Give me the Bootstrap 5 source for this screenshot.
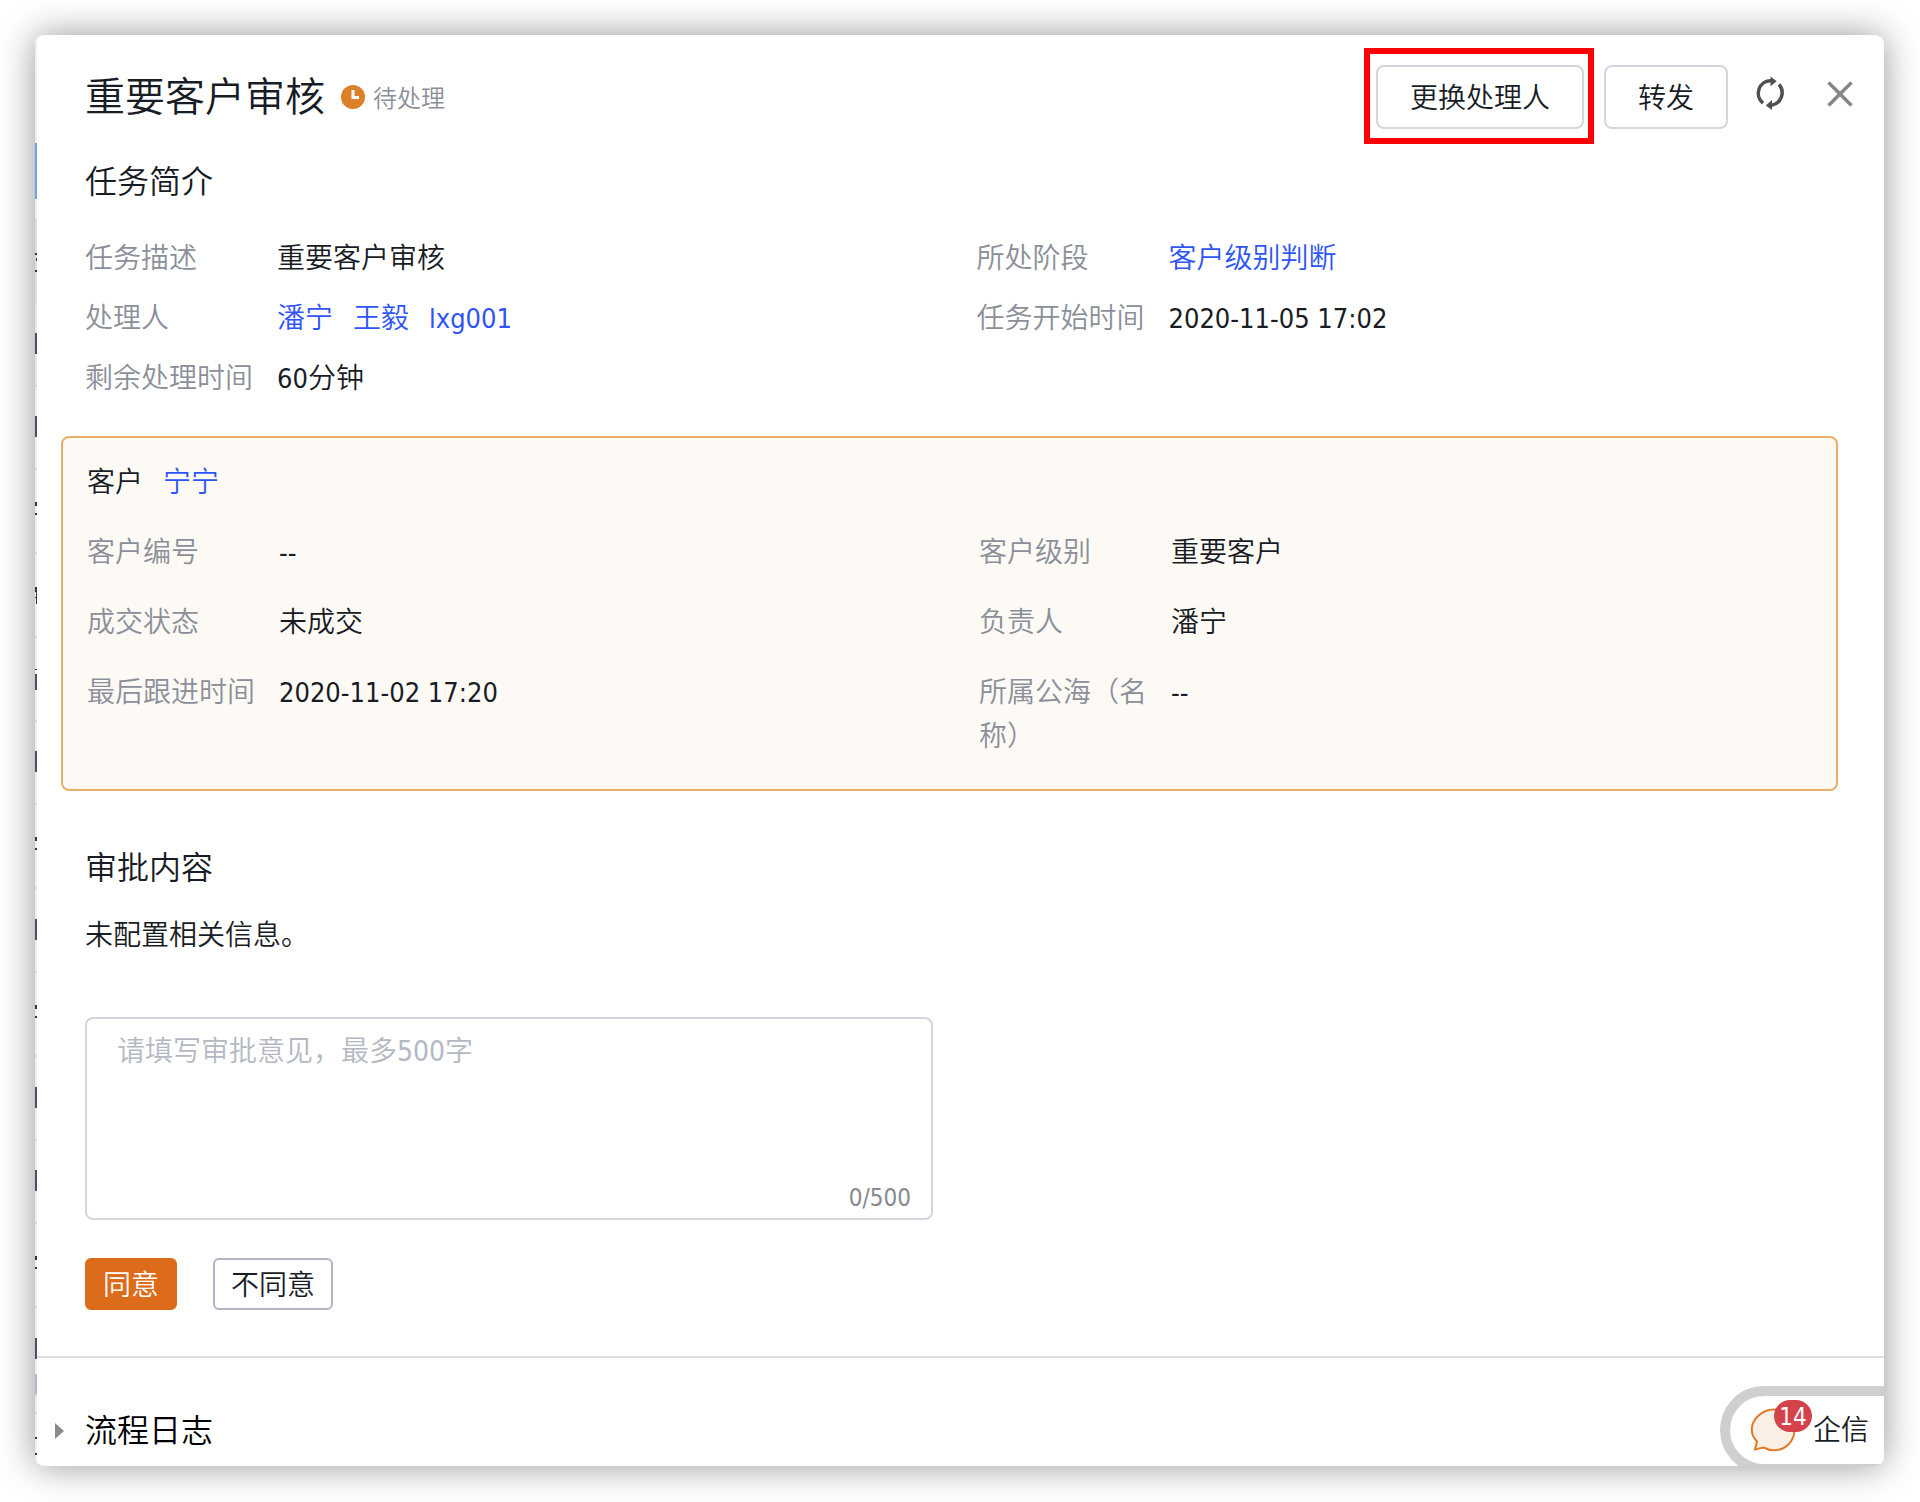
<!DOCTYPE html>
<html lang="zh-CN">
<head>
<meta charset="utf-8">
<meta name="viewport" content="width=device-width, initial-scale=1">
<title>重要客户审核</title>
<link href="https://cdn.jsdelivr.net/npm/bootstrap@5.3.0/dist/css/bootstrap.min.css" rel="stylesheet">
<style>
body{font-family:"DejaVu Sans Condensed","Noto Sans CJK SC",sans-serif;font-size:28px;line-height:44px;font-weight:350;color:#181c25;background:#fff;padding:35px 36px 36px 35px}
h1,h2,p,dl,dd,dt{margin:0;font-weight:350}
h1{font-size:40px;line-height:64px}
h2{font-size:32px;line-height:44px}
a{color:#2f54f6;text-decoration:none}
.panel{min-height:calc(100vh - 71px);border-radius:9px;box-shadow:0 0 36px rgba(0,0,0,.42);background:#fff}
.under{flex:0 0 2px;width:2px}
.under svg{display:block;width:2px;height:100%}
.head{padding:30px 24px 0 48px}
.state{font-size:24px;color:#8b8f99;gap:8px;margin-left:16px}
.tool{height:64px;border:2px solid #d4d5e1;border-radius:8px;background:#fff;padding:4px 32px 0;font-weight:350;color:#181c25}
.marker{position:absolute;inset:-17px -10px -15px -12px;border:6px solid #fb0007;pointer-events:none}
.glyph{height:58px;border:0;background:none;padding:0}
.block{padding:0 16px 0 48px}
.block-task{margin-top:31px}
.block-task .fields{margin-top:33px}
.block-review{margin-top:55px}
.block-review p{margin-top:24px}
.fields{display:grid;grid-template-columns:1fr 1fr;row-gap:16px}
.fields dt{width:168px;color:#8b8f99}
.field{gap:24px}
.names{gap:20px}
.num{font-size:27px;font-weight:400}
.record{margin:35px 46px 0 24px;border:2px solid #e8ae6a;border-radius:8px;background:#fdfaf5;padding:23px 0 30px 24px}
.record .fields{grid-template-columns:51fr 49fr;row-gap:26px;margin-top:26px}
.opinion{width:848px;max-width:100%;margin-top:59px}
.opinion textarea{display:block;width:100%;height:203px;border:2px solid #d4d5e1;border-radius:8px;padding:11px 30px;resize:none;font-weight:350}
.opinion textarea::placeholder{color:#b4b8c3;opacity:1}
.opinion output{position:absolute;right:22px;bottom:0;font-size:24px;font-weight:400;color:#868a90}
.acts{margin-top:38px;gap:36px}
.act{height:52px;border-radius:6px;padding:4px 16px 0;line-height:40px;border:2px solid #b1b5c3;background:#fff;color:#181c25;font-weight:350}
.act-ok{background:#dc6b1a;border-color:#dc6b1a;color:#fff}
.split{border-top:2px solid #dedfe1;margin-top:46px}
.log{border:0;background:none;padding:0 0 0 18px;gap:21px;margin:51px 0 13px}
.chat{right:0;bottom:-8px;height:88px;border:10px solid #cfcfcf;border-right:0;border-radius:44px 0 0 44px;background:#fff;padding:0 15px 0 20px;gap:17px;color:#181c25}
.chat-name{padding-top:2px}
.count{left:24px;top:-8px;width:38px;height:32px;line-height:34px;border-radius:16px;background:#d4434b;color:#fff;font-size:24px;font-weight:400;text-align:center}
</style>
<script src="https://cdn.jsdelivr.net/npm/bootstrap@5.3.0/dist/js/bootstrap.bundle.min.js"></script>
</head>
<body>
<div class="panel d-flex position-relative overflow-hidden">
  <div class="under" aria-hidden="true">
    <svg viewBox="0 0 2 1431" preserveAspectRatio="none">
      <rect width="2" height="1431" fill="#efefef"/>
      <path fill="#709fee" d="M0 108h2v56H0z"/>
      <path fill="#dedede" d="M0 186h2v80H0z"/>
      <path fill="#e3e9f4" d="M0 268h2v82H0z"/>
      <path fill="#d6d8e8" d="M0 184h2v2H0zM0 266h2v2H0zM0 350h2v2H0zM0 433h2v2H0zM0 517h2v2H0zM0 601h2v2H0zM0 685h2v2H0zM0 768h2v2H0zM0 852h2v2H0zM0 936h2v2H0zM0 1020h2v2H0zM0 1104h2v2H0zM0 1187h2v2H0zM0 1271h2v2H0zM0 1359h2v2H0zM0 1377h2v2H0z"/>
      <path fill="#4b4f63" d="M0 298h2v21H0zM0 381h2v21H0zM0 639h2v16H0zM0 716h2v21H0zM0 884h2v21H0zM0 1052h2v21H0zM0 1135h2v21H0zM0 1303h2v21H0z"/>
      <path fill="#33364a" d="M0 218h2v2H0zM1 223h1v3H1zM0 235h2v2H0zM0 467h2v4H0zM0 478h2v2H0zM0 552h2v5H0zM1 557h1v12H1zM0 562h2v1H0zM0 634h2v1H0zM0 802h2v4H0zM0 813h2v2H0zM0 970h2v4H0zM0 981h2v2H0zM0 1221h2v4H0zM0 1232h2v2H0zM0 1402h2v2H0zM0 1418h2v2H0z"/>
      <path fill="#afb8cc" d="M0 1339h2v20H0z"/>
    </svg>
  </div>
  <main class="flex-grow-1">
    <header class="head d-flex align-items-start">
      <div class="d-flex align-items-center me-auto">
        <h1>重要客户审核</h1>
        <span class="state d-flex align-items-center">
          <svg width="24" height="24" viewBox="0 0 24 24"><circle cx="12" cy="12" r="12" fill="#dc8029"/><path d="M12 5v7.500h6" fill="none" stroke="#fff" stroke-width="3"/></svg>
          <span class="pt-1">待处理</span>
        </span>
      </div>
      <div class="d-flex align-items-start">
        <span class="position-relative me-3"><button type="button" class="tool d-block">更换处理人</button><span class="marker"></span></span>
        <button type="button" class="tool ms-1">转发</button>
        <button type="button" class="glyph ms-4" aria-label="刷新">
          <svg class="d-block" width="36" height="36" viewBox="0 0 36 36"><g fill="none" stroke="#505050" stroke-width="3.500"><path d="M11 27.200A12.300 12.600 0 0 1 19 4.700"/><path d="M27 8.500A12.300 12.600 0 0 1 19.500 29.300"/></g><path fill="#505050" d="M18.500 .500l6.200 4.800-6.200 5zM20 24v10l-6.200-4.500z"/></svg>
        </button>
        <button type="button" class="glyph ms-4 ps-2" aria-label="关闭">
          <svg class="d-block" width="40" height="32" viewBox="0 0 40 32"><path d="M8.500 4.500l23 23M31.500 4.500l-23 23" stroke="#858585" stroke-width="3.400" fill="none"/></svg>
        </button>
      </div>
    </header>

    <section class="block block-task">
      <h2>任务简介</h2>
      <dl class="fields">
        <div class="field d-flex"><dt>任务描述</dt><dd>重要客户审核</dd></div>
        <div class="field d-flex"><dt>所处阶段</dt><dd><a href="#">客户级别判断</a></dd></div>
        <div class="field d-flex"><dt>处理人</dt><dd class="names d-flex"><a href="#">潘宁</a><a href="#">王毅</a><a href="#" class="num">lxg001</a></dd></div>
        <div class="field d-flex"><dt>任务开始时间</dt><dd class="num">2020-11-05 17:02</dd></div>
        <div class="field d-flex"><dt>剩余处理时间</dt><dd><span class="num">60</span>分钟</dd></div>
      </dl>
    </section>

    <section class="record">
      <div class="names d-flex"><span>客户</span><a href="#">宁宁</a></div>
      <dl class="fields">
        <div class="field d-flex"><dt>客户编号</dt><dd class="num">--</dd></div>
        <div class="field d-flex"><dt>客户级别</dt><dd>重要客户</dd></div>
        <div class="field d-flex"><dt>成交状态</dt><dd>未成交</dd></div>
        <div class="field d-flex"><dt>负责人</dt><dd>潘宁</dd></div>
        <div class="field d-flex"><dt>最后跟进时间</dt><dd class="num">2020-11-02 17:20</dd></div>
        <div class="field d-flex"><dt>所属公海（名称）</dt><dd class="num">--</dd></div>
      </dl>
    </section>

    <section class="block block-review">
      <h2>审批内容</h2>
      <p>未配置相关信息。</p>
      <div class="opinion position-relative">
        <textarea id="opinion" aria-label="审批意见" maxlength="500" placeholder="请填写审批意见，最多500字"></textarea>
        <output for="opinion">0/500</output>
      </div>
      <div class="acts d-flex">
        <button type="button" class="act act-ok">同意</button>
        <button type="button" class="act">不同意</button>
      </div>
    </section>

    <div class="split"></div>
    <button type="button" class="log d-flex align-items-center" aria-expanded="false">
      <svg width="9" height="16" viewBox="0 0 9 16"><path d="M0 0l9 8-9 8z" fill="#8a8a8a"/></svg>
      <h2>流程日志</h2>
    </button>
  </main>
  <a href="#" class="chat position-absolute d-flex align-items-center">
    <span class="position-relative d-block">
      <svg class="d-block" width="46" height="44" viewBox="0 0 46 44"><path d="M24 1.500c11.500 0 20.500 9 20.500 20.300S35.500 42.300 24 42.300c-4.500 0-7-1-10.500-2.800L5 41.500l2-8C3.500 30 1.800 26.500 1.800 21.800 1.800 10.500 12.500 1.500 24 1.500z" fill="#f9efe5" stroke="#e07a24" stroke-width="2"/></svg>
      <span class="count position-absolute">14</span>
    </span>
    <span class="chat-name">企信</span>
  </a>
</div>
</body>
</html>
